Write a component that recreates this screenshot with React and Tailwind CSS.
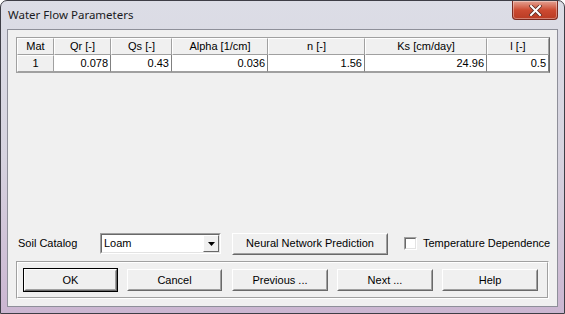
import React from "react";

const cols = [
  { h: "Mat", v: "1", w: "w-[37px]", fixed: true },
  { h: "Qr [-]", v: "0.078", w: "w-[57px]" },
  { h: "Qs [-]", v: "0.43", w: "w-[61px]" },
  { h: "Alpha [1/cm]", v: "0.036", w: "w-[96px]" },
  { h: "n [-]", v: "1.56", w: "w-[97px]" },
  { h: "Ks [cm/day]", v: "24.96", w: "w-[122px]" },
  { h: "l [-]", v: "0.5", w: "w-[62px]" },
];

function Btn({ children, w, def, cls = "" }) {
  const inner = (
    <div className="h-full w-full border border-t-white border-l-white border-r-[#696969] border-b-[#696969] bg-[#f0f0f0]">
      <div className="flex h-full w-full items-center justify-center whitespace-nowrap border border-transparent border-r-[#a0a0a0] border-b-[#a0a0a0] text-[11px] text-black">
        {children}
      </div>
    </div>
  );
  if (def) {
    return <div className={`${w} ${cls} h-[24px] shrink-0 border border-[#000]`}>{inner}</div>;
  }
  return <div className={`${w} ${cls} h-[24px] shrink-0 py-px`}>{inner}</div>;
}

export default function App() {
  return (
    <div
      className="relative h-[314px] w-[565px] overflow-hidden rounded-t-[7px] border border-[#3e3e46] bg-gradient-to-b from-[#dcdde6] via-[#d6d3df] to-[#cbb6d1]"
      style={{ fontFamily: '"Liberation Sans", Arial, sans-serif' }}
    >
      {/* title bar */}
      <div className="relative h-[28px]">
        <div
          className="absolute left-[7px] top-[6px] text-[11.5px] leading-[16px] text-[#1a1a22]"
          style={{ fontFamily: '"Noto Sans", "Open Sans", sans-serif' }}
        >
          Water Flow Parameters
        </div>
        <div className="absolute right-[6px] top-0 flex h-[19px] w-[46px] items-center justify-center rounded-b-[4px] border border-t-0 border-[#7a2a20] bg-gradient-to-b from-[#e3a192] via-[#cc4a31] to-[#b93b24] shadow-[inset_0_0_0_1px_rgba(255,255,255,0.35)]">
          <svg width="13" height="11" viewBox="0 0 13 11">
            <path d="M2 1 L11 10 M11 1 L2 10" stroke="#5a2a22" strokeWidth="3.6" strokeLinecap="square" />
            <path d="M2 1 L11 10 M11 1 L2 10" stroke="#ffffff" strokeWidth="2" strokeLinecap="square" />
          </svg>
        </div>
      </div>

      {/* client */}
      <div className="mx-[6px] h-[278px] border border-[#8e8f99] bg-[#f0f0f0]">
        <div className="flex h-full flex-col px-[8px] pt-[7px] pb-[7px]">
          {/* grid */}
          <div className="w-[534px] border border-t-[#a0a0a0] border-l-[#a0a0a0] border-r-[#696969] border-b-[#a0a0a0] bg-[#f0f0f0]">
            <div className="flex">
              {cols.map((c) => (
                <div
                  key={c.h}
                  className={`${c.w} flex h-[17px] shrink-0 items-center justify-center whitespace-nowrap border-t border-l border-t-white border-l-white border-r border-b border-r-[#a0a0a0] border-b-[#a0a0a0] text-[11px] text-black`}
                >
                  {c.h}
                </div>
              ))}
            </div>
            <div className="flex">
              {cols.map((c) =>
                c.fixed ? (
                  <div
                    key={c.h}
                    className={`${c.w} flex h-[17px] shrink-0 items-center justify-center border-t border-l border-t-white border-l-white border-r border-b border-r-[#a0a0a0] border-b-[#a0a0a0] text-[11px] text-black`}
                  >
                    {c.v}
                  </div>
                ) : (
                  <div
                    key={c.h}
                    className={`${c.w} flex h-[17px] shrink-0 items-center justify-end border-r border-b border-r-[#808080] border-b-[#a0a0a0] bg-white pr-[2px] text-[11px] text-black`}
                  >
                    {c.v}
                  </div>
                )
              )}
            </div>
          </div>

          <div className="flex-1" />

          {/* soil catalog row */}
          <div className="flex h-[23px] items-center whitespace-nowrap">
            <div className="ml-[2px] w-[82px] shrink-0 text-[11px] text-black">Soil Catalog</div>
            <div className="flex h-[21px] w-[121px] shrink-0 border border-t-[#a0a0a0] border-l-[#a0a0a0] border-r-white border-b-white">
              <div className="flex flex-1 items-center border border-t-[#696969] border-l-[#696969] border-r-[#e3e3e3] border-b-[#e3e3e3] bg-white">
                <span className="ml-[2px] flex-1 text-[11px] text-black">Loam</span>
                <div className="flex h-[17px] w-[16px] items-center justify-center border border-t-white border-l-white border-r-[#696969] border-b-[#696969] bg-[#f0f0f0]">
                  <svg width="7" height="4" viewBox="0 0 7 4">
                    <path d="M0 0 H7 L3.5 4 Z" fill="#000" />
                  </svg>
                </div>
              </div>
            </div>
            <Btn w="w-[156px]" cls="ml-[11px]">Neural Network Prediction</Btn>
            <div className="ml-[16px] h-[13px] w-[13px] shrink-0 border border-t-[#a0a0a0] border-l-[#a0a0a0] border-r-white border-b-white">
              <div className="h-full w-full border border-t-[#696969] border-l-[#696969] border-r-[#e3e3e3] border-b-[#e3e3e3] bg-white" />
            </div>
            <div className="ml-[6px] shrink-0 text-[11px] text-black">Temperature Dependence</div>
          </div>

          {/* button group */}
          <div className="mt-[6px] w-[533px] border border-t-[#a0a0a0] border-l-[#a0a0a0] border-r-white border-b-white">
            <div className="flex h-[36px] items-center gap-[9px] border border-t-white border-l-white border-r-[#a0a0a0] border-b-[#a0a0a0] pl-[5px]">
              <Btn w="w-[95px]" def>OK</Btn>
              <Btn w="w-[95px]">Cancel</Btn>
              <Btn w="w-[96px]" cls="ml-[1px]">Previous ...</Btn>
              <Btn w="w-[96px]">Next ...</Btn>
              <Btn w="w-[96px]">Help</Btn>
            </div>
          </div>
        </div>
      </div>
    </div>
  );
}
